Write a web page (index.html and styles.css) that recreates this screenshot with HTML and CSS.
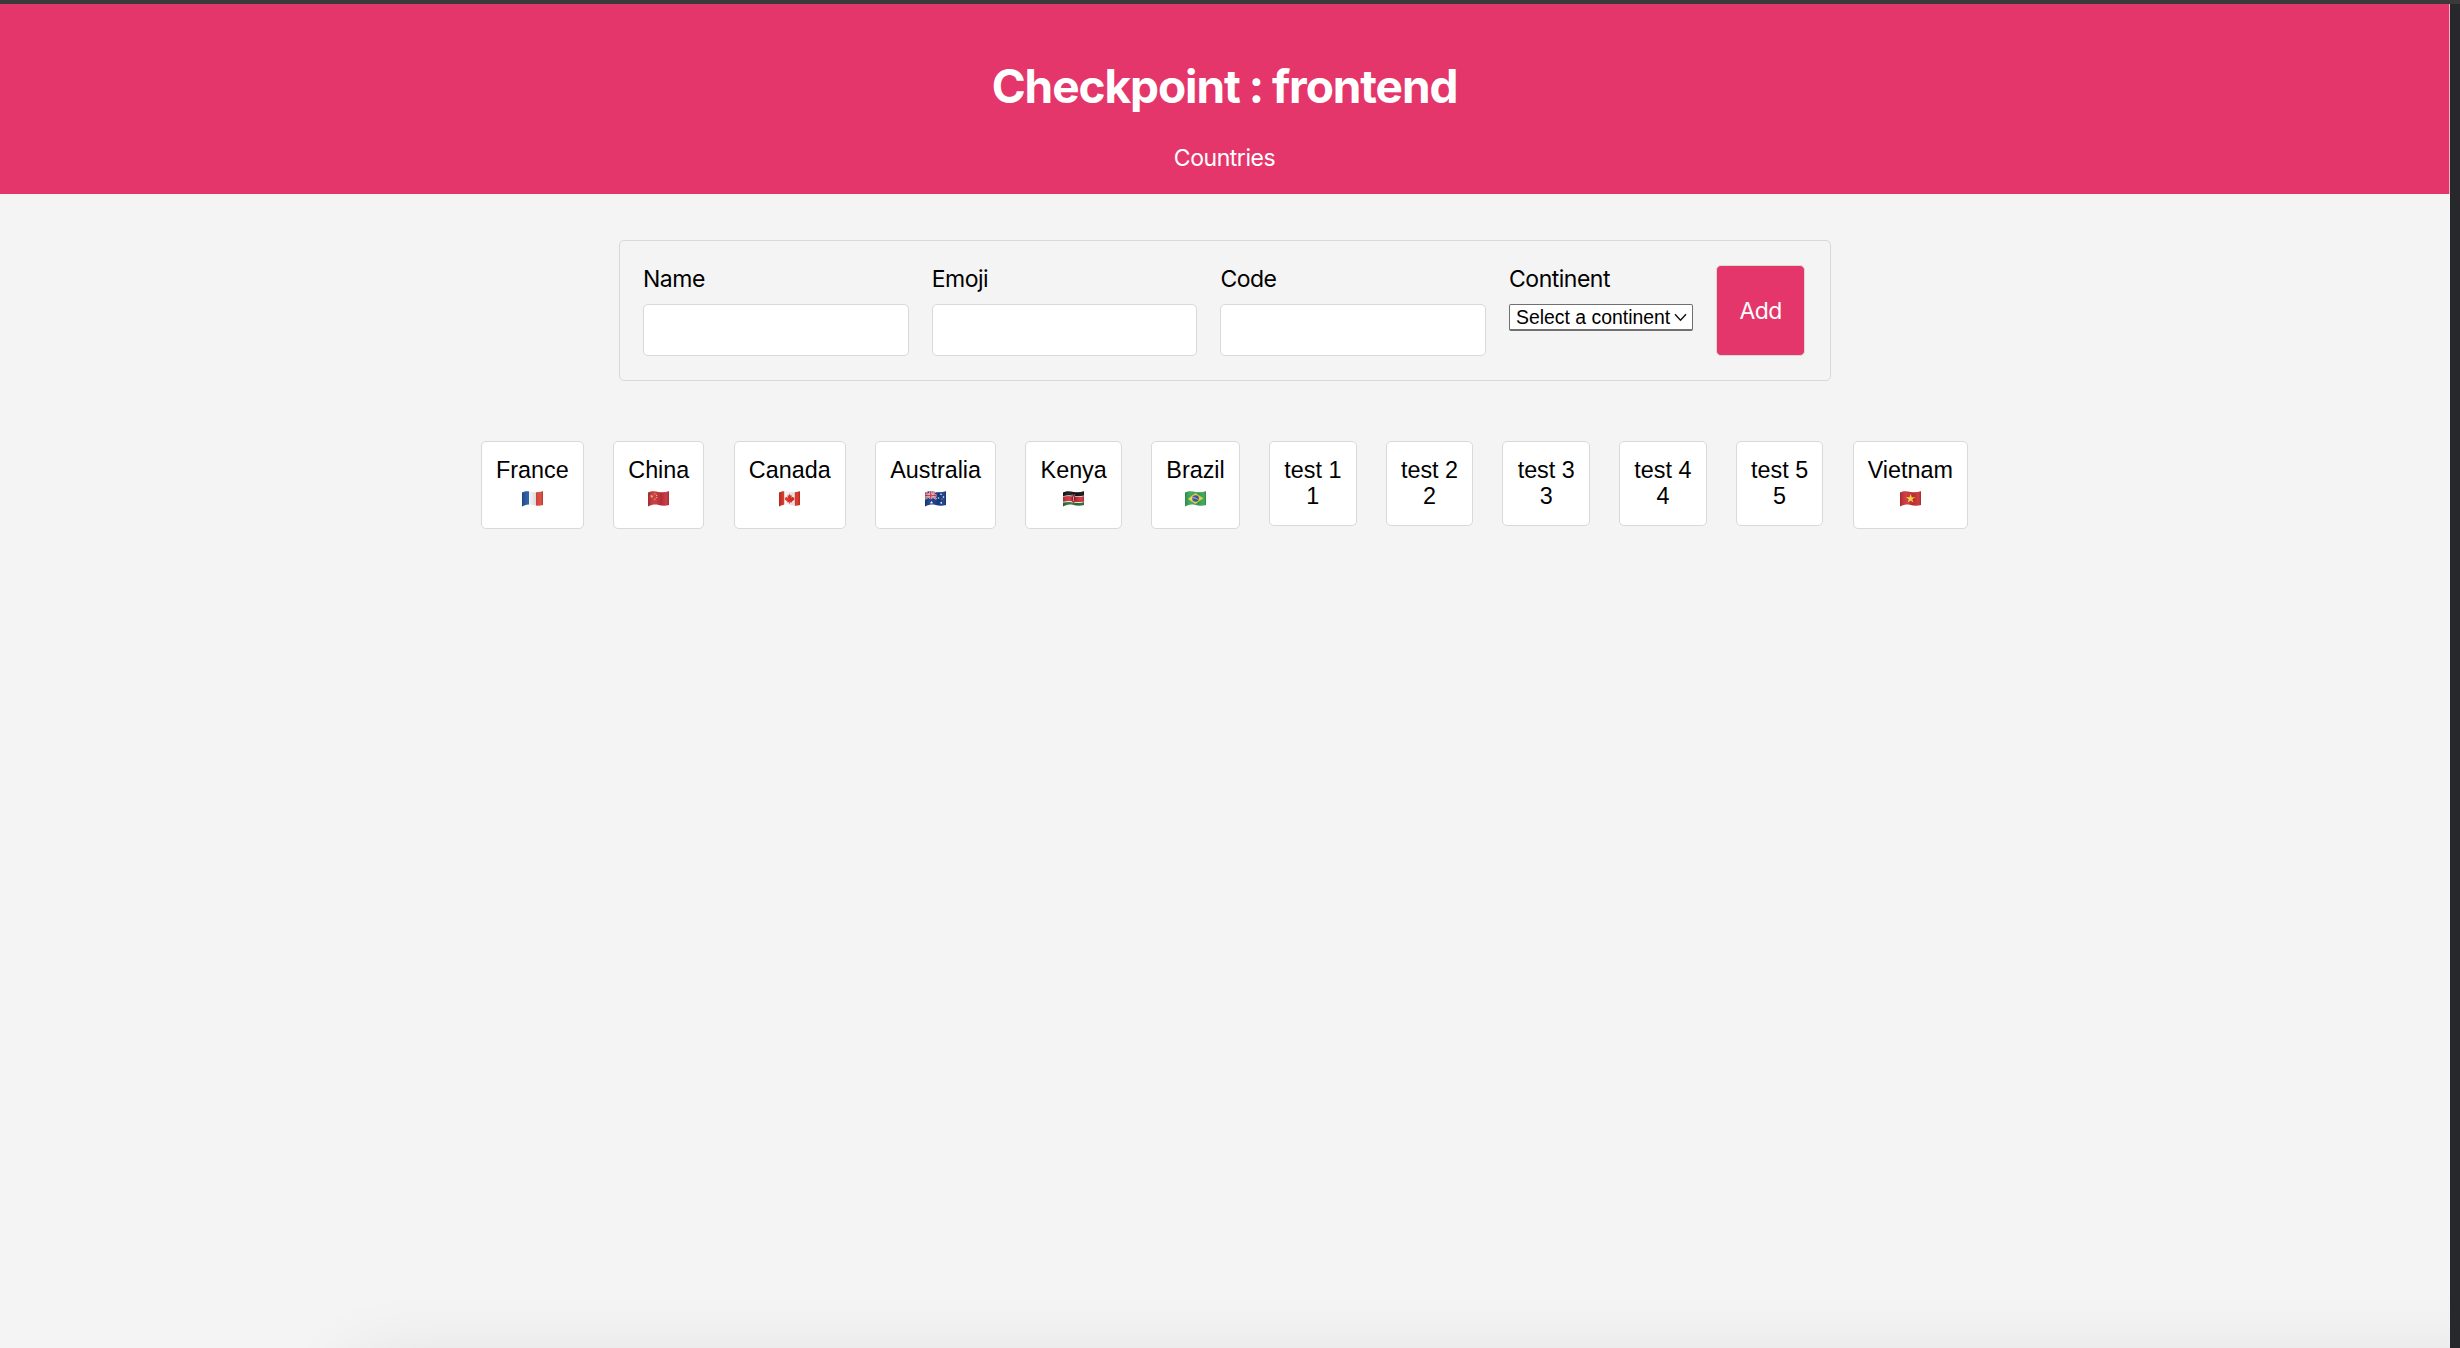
FILE: index.html
```html
<!DOCTYPE html>
<html lang="en">
<head>
<meta charset="utf-8">
<title>Checkpoint : frontend</title>
<link rel="stylesheet" href="styles.css">
</head>
<body>
<svg class="defs" width="0" height="0" aria-hidden="true">
  <defs>
    <clipPath id="wave"><path d="M0 1.6C4 -.4 7 .2 10.5 .9S17 1.4 21 .3V14C17 15.2 14 14.6 10.5 13.9S4 13.7 0 15.4Z"/></clipPath>
    <linearGradient id="shade"><stop offset="0" stop-color="#000" stop-opacity=".18"/><stop offset=".3" stop-color="#fff" stop-opacity=".08"/><stop offset=".65" stop-color="#000" stop-opacity=".1"/><stop offset=".85" stop-color="#fff" stop-opacity=".06"/><stop offset="1" stop-color="#000" stop-opacity=".2"/></linearGradient>
    <path id="star" d="M0-1L.23-.31H.95L.36.12.59.81 0 .38-.59.81-.36.12-.95-.31H-.23Z"/>
  </defs>
</svg>
<div class="page">
  <header class="header">
    <h1 class="title">Checkpoint : frontend</h1>
    <a class="nav-link">Countries</a>
  </header>
  <main class="main">
    <form class="form">
      <label class="field"><span class="label">Name</span><input class="input" type="text"></label>
      <label class="field"><span class="label">Emoji</span><input class="input" type="text"></label>
      <label class="field"><span class="label">Code</span><input class="input" type="text"></label>
      <div class="field"><span class="label">Continent</span>
        <div class="select"><span>Select a continent</span><svg class="chevron" viewBox="0 0 13 9"><path d="M1 1.2L6.5 7.2 12 1.2" fill="none" stroke="#111" stroke-width="1.4"/></svg></div>
      </div>
      <button class="button" type="button">Add</button>
    </form>
    <div class="cards">
      <div class="card card-flag"><span>France</span>
        <svg class="flag" viewBox="0 0 21 15.5"><g clip-path="url(#wave)"><path fill="#f4f5f7" d="M0 0h21v16H0z"/><path fill="#20549f" d="M0 0h7v16H0z"/><path fill="#dc4638" d="M14 0h7v16h-7z"/><path fill="url(#shade)" d="M0 0h21v16H0z"/></g></svg></div>
      <div class="card card-flag"><span>China</span>
        <svg class="flag" viewBox="0 0 21 15.5"><g clip-path="url(#wave)"><path fill="#c5303b" d="M0 0h21v16H0z"/><g fill="#f5d23c"><use href="#star" transform="translate(3.7 5.3) scale(2)"/><circle cx="7" cy="2.8" r=".6"/><circle cx="8.6" cy="4.4" r=".6"/><circle cx="8.6" cy="6.5" r=".6"/><circle cx="7" cy="8.2" r=".6"/></g><path fill="url(#shade)" d="M0 0h21v16H0z"/></g></svg></div>
      <div class="card card-flag"><span>Canada</span>
        <svg class="flag" viewBox="0 0 21 15.5"><g clip-path="url(#wave)"><path fill="#f4f4f4" d="M0 0h21v16H0z"/><path fill="#d92c20" d="M0 0h5.2v16H0zM15.8 0H21v16h-5.2z"/><path fill="#e02b20" d="M10.5 2.8l1.2 2 1.1-.5-.4 2.7 1.4-1.2.3.8 1.5-.2-.6 1.6.5.5-2.7 2 .1 1-2-.3.1 1.6h-.8l.1-1.6-2 .3.1-1-2.7-2 .5-.5-.6-1.6 1.5.2.3-.8 1.4 1.2-.4-2.7 1.1.5z"/><path fill="url(#shade)" d="M0 0h21v16H0z"/></g></svg></div>
      <div class="card card-flag"><span>Australia</span>
        <svg class="flag" viewBox="0 0 21 15.5"><g clip-path="url(#wave)"><path fill="#173b87" d="M0 0h21v16H0z"/><path stroke="#eee" stroke-width="1.9" d="M0 1l11.5 7M11.5 0L0 8"/><path stroke="#d9303e" stroke-width=".8" d="M0 1l11.5 7M11.5 0L0 8"/><path stroke="#eee" stroke-width="2.7" d="M5.8 0v8M0 4.5h11.5"/><path stroke="#d9303e" stroke-width="1.5" d="M5.8 0v8M0 4.5h11.5"/><g fill="#fff"><use href="#star" transform="translate(6.5 11.5) scale(1.7)"/><circle cx="16" cy="3.3" r=".8"/><circle cx="13.5" cy="7" r=".8"/><circle cx="18.5" cy="6" r=".8"/><circle cx="16.2" cy="11.8" r=".9"/><circle cx="17" cy="8" r=".4"/></g><path fill="url(#shade)" d="M0 0h21v16H0z"/></g></svg></div>
      <div class="card card-flag"><span>Kenya</span>
        <svg class="flag" viewBox="0 0 21 15.5"><g clip-path="url(#wave)"><path fill="#111" d="M0 0h21v6H0z"/><path fill="#eee" d="M0 5.2q5-1.5 10.5-.4T21 4.5v6.7q-5 1-10.5 0T0 11.5z"/><path fill="#d0303a" d="M0 5.9q5-1.5 10.5-.4T21 5.2v5.3q-5 1-10.5 0T0 10.8z"/><path fill="#27702f" d="M0 11.8q5-1.5 10.5-.4T21 11.3V16H0z"/><path stroke="#eee" stroke-width=".4" d="M9 3l3 9.5M12 3l-3 9.5"/><ellipse cx="10.5" cy="7.8" rx="1.7" ry="4" fill="#b81f2b"/><path stroke="#eee" stroke-width=".6" d="M10.5 5.5v4.5"/><path stroke="#111" stroke-width=".5" d="M9.1 6v3.5M11.9 6v3.5"/><path fill="url(#shade)" d="M0 0h21v16H0z"/></g></svg></div>
      <div class="card card-flag"><span>Brazil</span>
        <svg class="flag" viewBox="0 0 21 15.5"><g clip-path="url(#wave)"><path fill="#36a556" d="M0 0h21v16H0z"/><path fill="#f0d540" d="M10.5 2L18.2 7.2 10.5 12.9 2.9 8z"/><circle cx="10.5" cy="7.5" r="3.3" fill="#3d559f"/><path d="M7.4 6.7q3.5-.4 6.1 2.2" fill="none" stroke="#dfe6ee" stroke-width=".7"/><path fill="url(#shade)" d="M0 0h21v16H0z"/></g></svg></div>
      <div class="card card-test"><span>test 1</span><span>1</span></div>
      <div class="card card-test"><span>test 2</span><span>2</span></div>
      <div class="card card-test"><span>test 3</span><span>3</span></div>
      <div class="card card-test"><span>test 4</span><span>4</span></div>
      <div class="card card-test"><span>test 5</span><span>5</span></div>
      <div class="card card-flag"><span>Vietnam</span>
        <svg class="flag" viewBox="0 0 21 15.5"><g clip-path="url(#wave)"><path fill="#cb2f35" d="M0 0h21v16H0z"/><use href="#star" fill="#fbdc3c" transform="translate(10.6 7.7) scale(5)"/><path fill="url(#shade)" d="M0 0h21v16H0z"/></g></svg></div>
    </div>
  </main>
  <div class="dock-shadow"></div>
</div>
</body>
</html>
```
FILE: styles.css
```css
* {
  box-sizing: border-box;
}

body {
  margin: 0;
  height: 1348px;
  overflow: hidden;
  padding-right: 10px;
  border-top: 4px solid #3a3a3a;
  background: #26282c;
  color: #000;
  font-family: "Liberation Sans", Arial, sans-serif;
  font-size: 23.35px;
}

.defs {
  position: absolute;
}

.page {
  position: relative;
  height: 1344px;
  overflow: hidden;
  background: #f4f4f4;
}

.header {
  display: flex;
  flex-direction: column;
  align-items: center;
  height: 190px;
  padding-top: 54px;
  border-right: 1px solid #f3b0c6;
  background: #e4366b;
  color: #fff;
  font-family: Inter, sans-serif;
}

.title {
  margin: 0;
  font-size: 46px;
  line-height: 56px;
  font-weight: 700;
  letter-spacing: -1.1px;
  word-spacing: -0.8px;
}

.nav-link {
  margin-top: 30px;
  font-size: 23px;
  line-height: 28px;
  letter-spacing: -0.45px;
}

.main {
  display: flex;
  flex-direction: column;
  align-items: center;
  padding: 46px 1px 0 0;
}

.form {
  display: flex;
  align-items: flex-start;
  gap: 23px;
  width: 1212px;
  height: 141px;
  padding: 24px 0 0 23.5px;
  border: 1px solid #d9d9d9;
  border-radius: 5px;
  font-family: Inter, sans-serif;
}

.field {
  display: flex;
  flex-direction: column;
}

.label {
  height: 39px;
  line-height: 28px;
  font-size: 23px;
  letter-spacing: -0.5px;
}

.input {
  width: 265.7px;
  height: 52px;
  border: 1px solid #d9d9d9;
  border-radius: 5px;
  background: #fff;
}

.select {
  display: flex;
  align-items: center;
  justify-content: space-between;
  width: 184px;
  height: 27px;
  padding: 0 5px 0 6px;
  border: 1px solid #707070;
  border-bottom-width: 2px;
  border-radius: 2px;
  background: #fff;
  font-family: "Liberation Sans", Arial, sans-serif;
  font-size: 19.4px;
  white-space: nowrap;
}

.chevron {
  width: 13px;
  height: 9px;
}

.button {
  width: 89px;
  height: 91px;
  padding: 0;
  border: 1px solid #d9d9d9;
  border-radius: 5px;
  background: #e4366b;
  color: #fff;
  font-family: Inter, sans-serif;
  font-size: 23px;
  letter-spacing: -0.7px;
}

.cards {
  display: flex;
  align-items: flex-start;
  justify-content: center;
  gap: 29.2px;
  margin-top: 60px;
}

.card {
  display: flex;
  flex-direction: column;
  align-items: center;
  height: 85px;
  padding: 15px 14.2px 0;
  border: 1px solid #d9d9d9;
  border-radius: 5px;
  background: #fff;
  line-height: 26px;
}

.card-test {
  width: 87.5px;
}

.card-flag {
  height: 88px;
}

.flag {
  width: 21px;
  height: 15.5px;
  margin-top: 8px;
}

.dock-shadow {
  position: absolute;
  left: 350px;
  right: -300px;
  top: 1364px;
  height: 300px;
  border-radius: 20px;
  box-shadow: 0 0 80px rgba(0, 0, 0, 0.11);
}
```
